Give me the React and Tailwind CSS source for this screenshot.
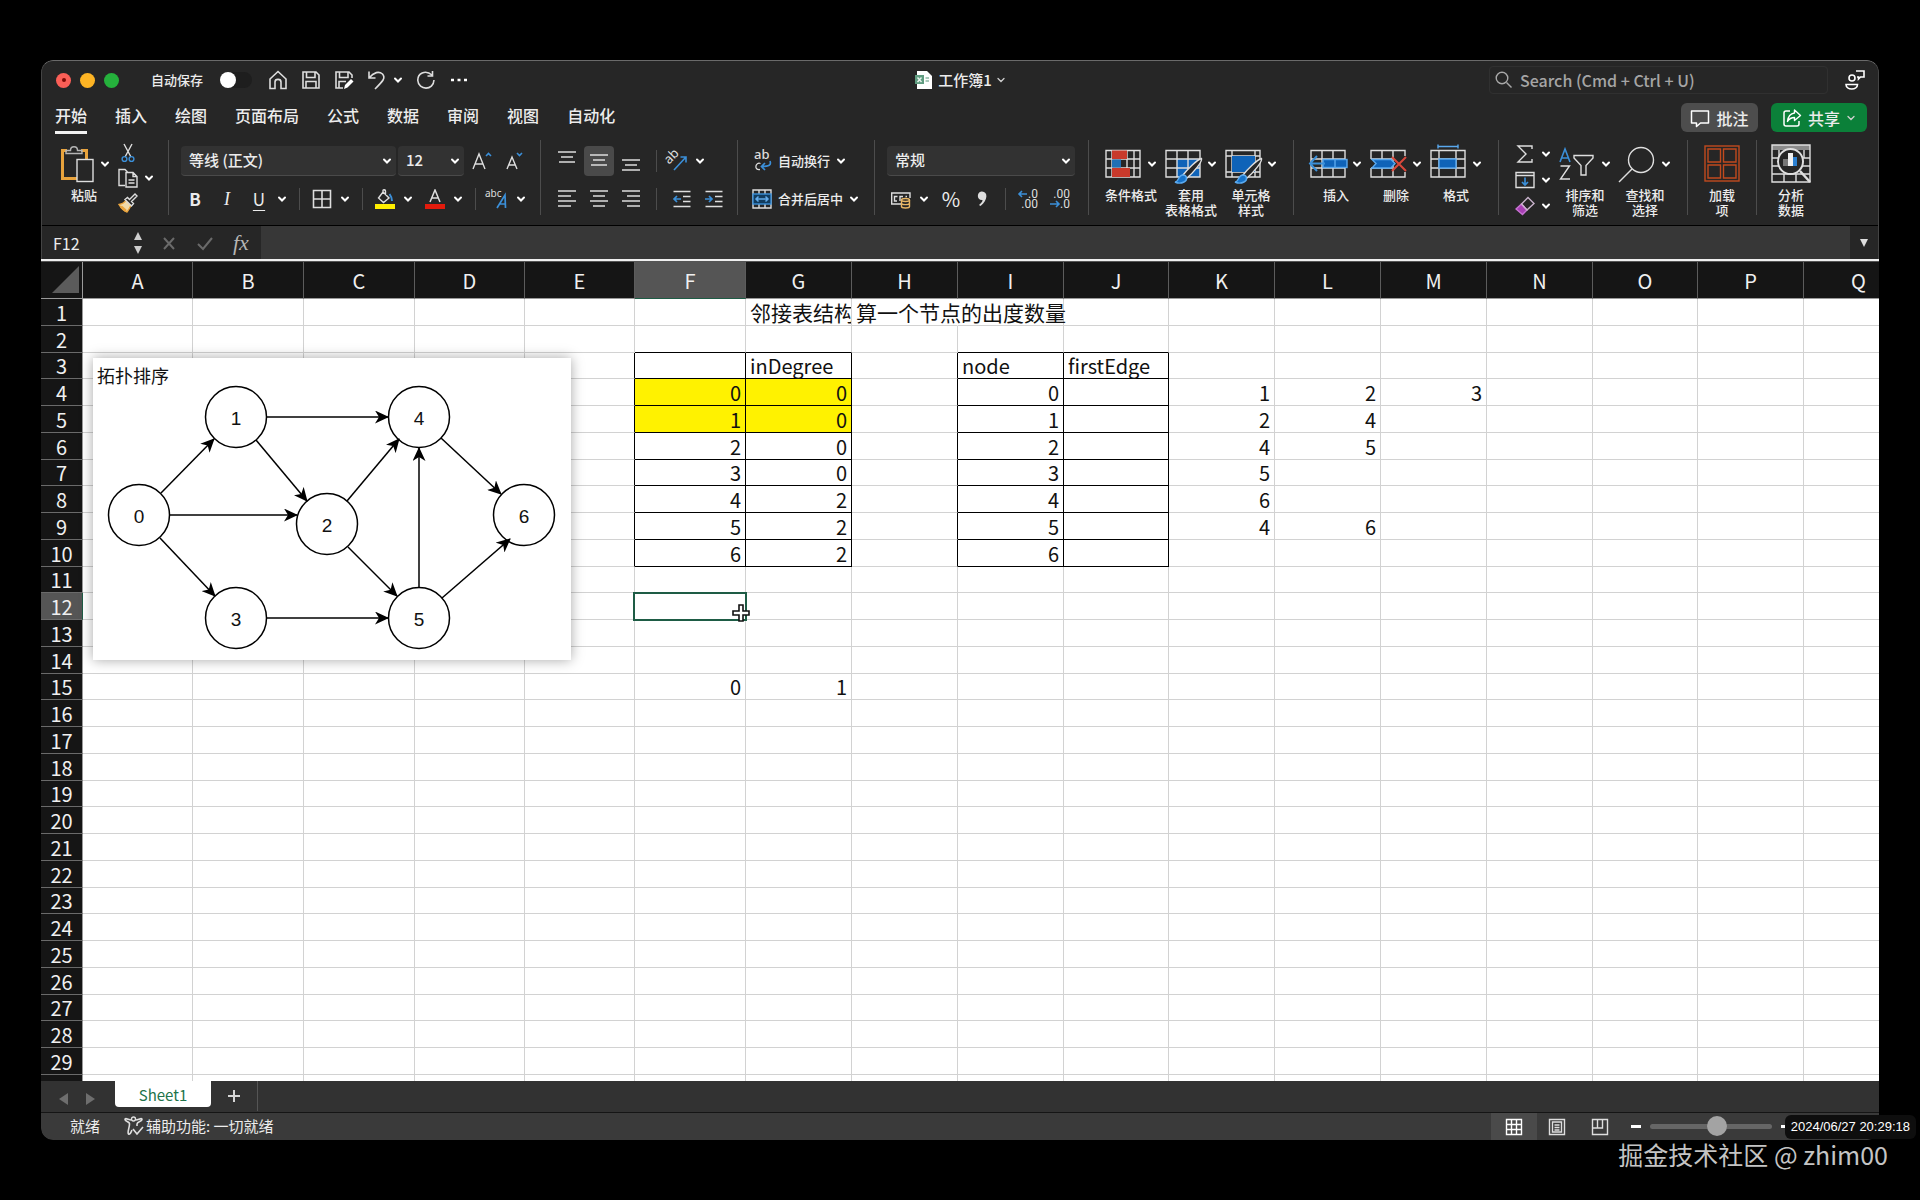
import { clsx } from "clsx";

const SHEET_COLUMNS = [
  { name: "A", width: "w-[110px]" },
  { name: "B", width: "w-[111px]" },
  { name: "C", width: "w-[111px]" },
  { name: "D", width: "w-[110px]" },
  { name: "E", width: "w-[110px]" },
  { name: "F", width: "w-[111px]" },
  { name: "G", width: "w-[106px]" },
  { name: "H", width: "w-[106px]" },
  { name: "I", width: "w-[106px]" },
  { name: "J", width: "w-[105px]" },
  { name: "K", width: "w-[106px]" },
  { name: "L", width: "w-[106px]" },
  { name: "M", width: "w-[106px]" },
  { name: "N", width: "w-[106px]" },
  { name: "O", width: "w-[105px]" },
  { name: "P", width: "w-[106px]" },
  { name: "Q", width: "w-[110px]" },
];

const ROWS = Array.from({ length: 30 }, (_, index) => index + 1);

const CELLS = {
  G1: "邻接表结构",
  H1: "算一个节点的出度数量",
  G3: "inDegree",
  I3: "node",
  J3: "firstEdge",
  F4: 0, G4: 0, I4: 0, K4: 1, L4: 2, M4: 3,
  F5: 1, G5: 0, I5: 1, K5: 2, L5: 4,
  F6: 2, G6: 0, I6: 2, K6: 4, L6: 5,
  F7: 3, G7: 0, I7: 3, K7: 5,
  F8: 4, G8: 2, I8: 4, K8: 6,
  F9: 5, G9: 2, I9: 5, K9: 4, L9: 6,
  F10: 6, G10: 2, I10: 6,
  F15: 0, G15: 1,
};

const HIGHLIGHTED = ["F4", "G4", "F5", "G5"];
const BOXED_COLUMNS = ["F", "G", "I", "J"];
const ACTIVE = { column: "F", row: 12 };

const TABS = ["开始", "插入", "绘图", "页面布局", "公式", "数据", "审阅", "视图", "自动化"];

const NODES = [
  { id: 0, x: 46, y: 157 },
  { id: 1, x: 143, y: 59 },
  { id: 2, x: 234, y: 166 },
  { id: 3, x: 143, y: 260 },
  { id: 4, x: 326, y: 59 },
  { id: 5, x: 326, y: 260 },
  { id: 6, x: 431, y: 157 },
];

const EDGES = [
  [68, 135, 121, 81],
  [174, 59, 295, 59],
  [163, 82, 214, 143],
  [77, 157, 204, 157],
  [254, 143, 306, 81],
  [67, 180, 122, 238],
  [174, 260, 295, 260],
  [255, 189, 304, 238],
  [326, 229, 326, 90],
  [348, 80, 408, 136],
  [349, 240, 417, 181],
];

function isBoxed(column, row) {
  return BOXED_COLUMNS.includes(column) && row >= 3 && row <= 10;
}

/* ---------- icons ---------- */

function Icon({ children, className = "h-5 w-5", box = "0 0 20 20" }) {
  return (
    <svg
      aria-hidden="true"
      className={clsx("shrink-0", className)}
      fill="none"
      stroke="#dedede"
      strokeWidth="1.4"
      viewBox={box}
    >
      {children}
    </svg>
  );
}

function Chevron({ thin }) {
  return (
    <svg aria-hidden="true" className="h-2.5 w-2.5 shrink-0" fill="none" viewBox="0 0 10 10">
      <path d="M2 3.5 5 6.5 8 3.5" stroke={thin ? "#d0d0d0" : "#fff"} strokeLinecap="round" strokeWidth={thin ? 1.3 : 2} />
    </svg>
  );
}

function Lines({ rows }) {
  return (
    <Icon>
      {rows.map(([x1, x2, y]) => (
        <path d={`M${x1} ${y}H${x2}`} key={y} strokeWidth="1.5" />
      ))}
    </Icon>
  );
}

function PasteIcon() {
  return (
    <Icon box="0 0 36 40" className="h-10 w-9">
      <path d="M9 6.5H4.5V34.5H19M23 6.5H28.5V15" stroke="#e8a33d" strokeWidth="3" />
      <path d="M8 9.5V6.5H12.5C12.5 1.5 19.5 1.5 19.5 6.5H24V9.5Z" stroke="#b5b5b5" />
      <rect fill="#262626" height="22" width="16" x="19" y="15.5" />
    </Icon>
  );
}

function CutIcon() {
  return (
    <Icon>
      <path d="M6 1 13 14M14 1 7 14" />
      <circle cx="6.5" cy="16" r="2.4" stroke="#3b8fd8" />
      <circle cx="13.5" cy="16" r="2.4" stroke="#3b8fd8" />
    </Icon>
  );
}

function CopyIcon() {
  return (
    <Icon>
      <path d="M7 17.5H1V1.5H7L9.5 4" />
      <path d="M8 4.5H15L19 8.5V19H8ZM15 4.5V8.5H19M10.5 12H16.5M10.5 15H16.5" fill="#262626" />
    </Icon>
  );
}

function BrushIcon() {
  return (
    <Icon>
      <path d="M1 11.5C4.500 11 7 9 8 7L13 12.5C12 14.5 10.500 17 9 19 6 18 3 15 1 11.5Z" fill="#f0d9a8" stroke="#e8a33d" />
      <path d="M3 13.500 8 18" stroke="#e8a33d" strokeWidth="2.5" />
      <path d="M7 6.5 13.5 13 15.500 10.5 13.5 8.5 19 3 17 1 11.5 6.5 9.5 4.5Z" fill="#262626" />
    </Icon>
  );
}

function FontSizeIcon({ down }) {
  return (
    <Icon>
      {down ? (
        <path d="M3 18 8 6 13 18M5 14H11" />
      ) : (
        <path d="M1 18 7 3 13 18M3 13H11" />
      )}
      <path d={down ? "M13 2 15.500 4.500 18 2" : "M14 5 16.500 2.500 19 5"} stroke="#3b8fd8" strokeWidth="1.6" />
    </Icon>
  );
}

function BordersIcon() {
  return (
    <Icon>
      <path d="M1.5 1.5H18.5V18.5H1.5ZM10 1.5V18.5M1.5 10H18.5" strokeWidth="1.6" />
    </Icon>
  );
}

function FillColorIcon() {
  return (
    <Icon>
      <path d="M8 3 14 9 8.5 13.5 3.5 9ZM8 3V1.5C8 .5 10.5 .5 10.5 2V6" />
      <path d="M14.5 5C16 7 17 9 17 12" stroke="#3b8fd8" strokeWidth="2" />
      <rect fill="#ffee00" height="5" stroke="none" width="20" y="15" />
    </Icon>
  );
}

function FontColorIcon() {
  return (
    <Icon>
      <path d="M5 13 10 1 15 13M7 9H13" strokeWidth="1.5" />
      <rect fill="#e31b0c" height="5" stroke="none" width="20" y="15" />
    </Icon>
  );
}

function PhoneticIcon() {
  return (
    <Icon className="h-5 w-5 overflow-visible">
      <text fill="#dedede" fontFamily="Noto Sans" fontSize="10" stroke="none" x="-3" y="8">abc</text>
      <path d="M9 19 17 6 17.5 19M12 15H17.5" stroke="#3b8fd8" strokeWidth="1.7" />
    </Icon>
  );
}

function OrientationIcon() {
  return (
    <Icon className="h-5 w-5 overflow-visible">
      <text fill="#dedede" fontFamily="Noto Sans" fontSize="13" stroke="none" transform="rotate(-45 4 13)" x="2" y="12">ab</text>
      <path d="M7 19 19 6M13.5 6H19V11.5" stroke="#3b8fd8" strokeWidth="1.6" />
    </Icon>
  );
}

function IndentIcon({ right }) {
  return (
    <Icon>
      <path d="M1.5 2.5H18.5M11 7.5H18.5M11 12.5H18.5M1.5 17.5H18.5" strokeWidth="1.5" />
      <path d={right ? "M1 10H8M5 7 8 10 5 13" : "M9 10H2M5 7 2 10 5 13"} stroke="#3b8fd8" strokeWidth="1.7" />
    </Icon>
  );
}

function WrapIcon() {
  return (
    <Icon className="h-5 w-5 overflow-visible">
      <text fill="#dedede" fontFamily="Noto Sans" fontSize="13" stroke="none" x="2" y="8">ab</text>
      <path d="M8.5 12.500C3.500 10.500 1.500 19.500 8 18.500" strokeWidth="1.3" />
      <path d="M18 10C19.5 14 17 15.5 10 15.5M13 12 9.5 15.5 13 19" stroke="#3b8fd8" strokeWidth="1.7" />
    </Icon>
  );
}

function MergeIcon() {
  return (
    <Icon>
      <path d="M1 1H19V19H1ZM7 1V5M13 1V5M7 15V19M13 15V19" />
      <rect fill="#123c5e" height="10" stroke="#3b8fd8" width="18" x="1" y="5" />
      <path d="M4 10H16M6.5 7.5 4 10 6.5 12.5M13.5 7.5 16 10 13.5 12.5" stroke="#62abea" strokeWidth="1.5" />
    </Icon>
  );
}

function CurrencyIcon() {
  return (
    <Icon>
      <path d="M10 15H.7V4H19V9" />
      <path d="M6.5 7.5H3.5V12H6M12 7.5H9V12M14.5 7.5H16" />
      <path d="M10.5 11V17.5C10.5 19.5 18.5 19.5 18.5 17.5V11" fill="#262626" stroke="#e9b765" />
      <ellipse cx="14.5" cy="11" fill="#262626" rx="4" ry="1.5" stroke="#e9b765" />
      <path d="M10.5 14.5C11 16 18 16 18.5 14.5" stroke="#e9b765" />
    </Icon>
  );
}

function DecimalIcon({ decrease }) {
  return (
    <Icon className="h-5 w-5 overflow-visible">
      <text fill="#dedede" fontFamily="Roboto" fontSize="12" stroke="none" textAnchor="end" x="20" y="9">
        {decrease ? ".00" : ".0"}
      </text>
      <text fill="#dedede" fontFamily="Roboto" fontSize="12" stroke="none" textAnchor="end" x="20" y="19">
        {decrease ? ".0" : ".00"}
      </text>
      <path
        d={decrease ? "M0 15H9M6 12 9 15 6 18" : "M9 5H1M4 2 1 5 4 8"}
        stroke="#3b8fd8"
        strokeWidth="1.6"
      />
    </Icon>
  );
}

function TableGrid() {
  return <path d="M1 6.5H35V33H1ZM1 15H35M1 24H35M12 6.5V33M23 6.5V33" />;
}

function PaintBrush() {
  return (
    <>
      <path d="M18 31C22 26 32 15.5 36.500 14.500 37.500 18 28 29 22 34Z" fill="#262626" />
      <path d="M10 38C14 38 13 31 18 31 22 31 23 36 19 38 16 39.5 12 39 10 38Z" fill="#1572c9" stroke="#5aa9ee" />
    </>
  );
}

function ConditionalIcon() {
  return (
    <Icon box="0 0 36 40" className="h-10 w-9">
      <path d="M1 6.5H35V33H1ZM1 15H35M1 24H35M7 6.5V33M22 6.5V33M29 6.5V33" />
      <path d="M7 6.5H22V15H7ZM7 24H25V33H7Z" fill="#c8392b" stroke="none" />
      <rect fill="#1f6fb5" height="8" stroke="none" width="9" x="7" y="15.5" />
    </Icon>
  );
}

function TableFormatIcon() {
  return (
    <Icon box="0 0 36 40" className="h-10 w-9 overflow-visible">
      <rect fill="#0f63b8" height="18" stroke="none" width="23" x="12" y="15" />
      <TableGrid />
      <PaintBrush />
    </Icon>
  );
}

function CellStyleIcon() {
  return (
    <Icon box="0 0 36 40" className="h-10 w-9 overflow-visible">
      <path d="M1 6.5H35V33H1ZM1 12H35M7 6.5V33M1 28H35M30 6.5V33" />
      <rect fill="#0f63b8" height="16" stroke="none" width="23" x="7" y="12" />
      <PaintBrush />
    </Icon>
  );
}

function InsertIcon() {
  return (
    <Icon box="0 0 36 40" className="h-10 w-9 overflow-visible">
      <TableGrid />
      <rect fill="#0f63b8" height="8" stroke="#5aa9ee" width="24" x="13" y="15.5" />
      <path d="M25 16V23" stroke="#5aa9ee" />
      <path d="M15 19.5H0M7 12 0 19.5 7 27" stroke="#3b8fd8" strokeWidth="2" />
    </Icon>
  );
}

function DeleteIcon() {
  return (
    <Icon box="0 0 36 40" className="h-10 w-9 overflow-visible">
      <path d="M1 15V6.5H35V12M1 24V33H35V28M12 6.5V33M23 6.5V33M1 15H22M1 24H22" />
      <path d="M2 15.5H21L25 19.500 21 24H2L6 19.5Z" fill="#0f63b8" stroke="#5aa9ee" />
      <path d="M22 13 36 27M36 13 22 27" stroke="#d9483b" strokeWidth="2" />
    </Icon>
  );
}

function FormatIcon() {
  return (
    <Icon box="0 0 36 40" className="h-10 w-9 overflow-visible">
      <path d="M1 6.5H35V33H1ZM1 15H35M1 24H35M9 6.5V33M26 6.5V33" />
      <rect fill="#0f63b8" height="9" stroke="#5aa9ee" width="17" x="9" y="15" />
      <path d="M8 2.5H28M8 .5V4.5M28 .5V4.5" stroke="#5aa9ee" />
    </Icon>
  );
}

function SortIcon() {
  return (
    <Icon box="0 0 36 40" className="h-10 w-9 overflow-visible">
      <path d="M1 18 6 5 11 18M3 14H9" stroke="#3b8fd8" strokeWidth="1.6" />
      <path d="M1.5 22H10.5L1.5 35H11" />
      <path d="M15 11.5H34V14L27 21.5V31H22V21.5L15 14Z" />
    </Icon>
  );
}

function FindIcon() {
  return (
    <Icon box="0 0 36 40" className="h-10 w-9 overflow-visible">
      <circle cx="22" cy="16" r="12.5" />
      <path d="M13 25 0 38" />
    </Icon>
  );
}

function AddInIcon() {
  return (
    <Icon box="0 0 36 40" className="h-10 w-9">
      <g stroke="#c14a1e">
        <rect height="35" width="34" x="1" y="2" />
        <path d="M4 5H16.5V18H4ZM19.5 5H32V18H19.5ZM4 21H16.5V34H4ZM19.5 21H32V34H19.5Z" />
      </g>
    </Icon>
  );
}

function AnalyzeIcon() {
  return (
    <Icon box="0 0 36 40" className="h-10 w-9 overflow-visible">
      <path d="M-1 1H37V6H-1Z" fill="#8b8b8b" stroke="none" />
      <path d="M-1 1H37V38H-1ZM-1 14H37M-1 22H37M-1 30H37M11 30V38M23 30V38M6 6V14M31 6V14" />
      <circle cx="17.5" cy="17.5" fill="#262626" r="12.5" strokeWidth="2" />
      <rect fill="#777" height="7" stroke="none" width="5" x="10" y="15" />
      <rect fill="#f0f0f0" height="13" stroke="none" width="5" x="15" y="9" />
      <rect fill="#2a7fd0" height="9" stroke="none" width="4" x="20" y="13" />
      <path d="M27 27 37 38" strokeWidth="2.5" />
    </Icon>
  );
}

/* ---------- ribbon pieces ---------- */

function Group({ children, className }) {
  return <div className={clsx("flex h-[75px] shrink-0 border-r border-[#4c4c4c]", className)}>{children}</div>;
}

function Separator() {
  return <div className="h-[22px] w-px shrink-0 bg-[#4c4c4c]" />;
}

function BigButton({ icon, label, menu = true }) {
  return (
    <button
      className={clsx("flex shrink-0 flex-col items-center gap-[3px] pt-1", menu ? "w-[52px]" : "w-9")}
      type="button"
    >
      <span className="flex items-center gap-1.5">
        {icon}
        {menu ? <Chevron /> : null}
      </span>
      <span className="whitespace-pre text-[13px] leading-[15px] font-medium">{label}</span>
    </button>
  );
}

function SplitButton({ children, label, gap = "gap-2" }) {
  return (
    <button aria-label={label} className={clsx("flex h-[26px] shrink-0 items-center", gap)} type="button">
      {children}
      <Chevron />
    </button>
  );
}

function ToolButton({ children, label, active, className = "w-5" }) {
  return (
    <button
      aria-label={label}
      className={clsx("flex h-[30px] shrink-0 items-center justify-center rounded", active && "bg-[#4a4a4a]", className)}
      type="button"
    >
      {children}
    </button>
  );
}

function Dropdown({ label, value, className }) {
  return (
    <div className={clsx("relative flex h-[30px] shrink-0 items-center rounded border-b border-[#4a4a4a] bg-[#323232]", className)}>
      <select aria-label={label} className="h-full w-full appearance-none pl-2 text-[15px] font-medium outline-none" defaultValue={value}>
        <option value={value}>{value}</option>
      </select>
      <span className="pointer-events-none absolute right-1">
        <Chevron />
      </span>
    </div>
  );
}

function TitleBar() {
  return (
    <div className="grid h-[38px] grid-cols-[1fr_auto_1fr] items-center">
      <div className="flex items-center pl-[14px]">
        <div className="flex gap-[9px]">
          <button aria-label="关闭" className="flex h-[15px] w-[15px] items-center justify-center rounded-full bg-[#fb5f57]" type="button">
            <span className="h-1 w-1 rounded-full bg-[#7d0a05]" />
          </button>
          <button aria-label="最小化" className="h-[15px] w-[15px] rounded-full bg-[#fdb424]" type="button" />
          <button aria-label="缩放" className="h-[15px] w-[15px] rounded-full bg-[#25b13c]" type="button" />
        </div>
        <label className="ml-8 flex items-center gap-[17px] text-[13px] font-medium">
          自动保存
          <input className="peer sr-only" type="checkbox" />
          <span className="h-4 w-8 rounded-full bg-[#1e1e1e]">
            <span className="block h-4 w-4 rounded-full bg-white" />
          </span>
        </label>
        <div className="ml-4 flex items-center gap-[13px]">
          <ToolButton label="主页">
            <Icon>
              <path d="M2 9 10 1.5 18 9V18.5H13V12C13 8.5 7 8.5 7 12V18.5H2Z" strokeWidth="1.6" />
            </Icon>
          </ToolButton>
          <ToolButton label="保存">
            <Icon>
              <path d="M2 2H15L18 5V18H2ZM5.5 2V7.5H14V2M5 18V11.5H15V18" strokeWidth="1.6" />
            </Icon>
          </ToolButton>
          <ToolButton label="另存为">
            <Icon>
              <path d="M9 18H2V2H15L18 5V8M5.5 2V7.5H14V2M5 18V11.5H12" strokeWidth="1.6" />
              <path d="M10 19 11 15 17 9 19.5 11.5 13.5 17.5Z" fill="#fff" stroke="none" />
            </Icon>
          </ToolButton>
          <SplitButton gap="gap-1.5" label="撤消">
            <Icon>
              <path d="M2 1.5V8H8.5M2 8C7 2 12 1 15.5 4 19 8 16 11 8 19" strokeWidth="1.6" />
            </Icon>
          </SplitButton>
          <ToolButton label="恢复">
            <Icon>
              <path d="M16 5C9 -1 1.5 4 1.8 10.5 2.5 20.5 17.5 21 18 10M16.5 1V6H11.5" strokeWidth="1.6" />
            </Icon>
          </ToolButton>
          <ToolButton label="更多">
            <Icon>
              <path d="M2 10H5M8.5 10H11.5M15 10H18" stroke="#fff" strokeWidth="2.6" />
            </Icon>
          </ToolButton>
        </div>
      </div>
      <button className="flex items-center gap-1 text-[15px] leading-5 font-medium" type="button">
        <Icon>
          <path d="M3 1H13L18 6V19H3Z" fill="#fff" stroke="none" />
          <rect fill="#5f9c80" height="9" stroke="none" width="9" x="1" y="5" />
          <path d="M3.5 7.5 7.5 12M7.5 7.5 3.5 12" stroke="#e9f4ee" />
          <path d="M11.5 8H15M11.5 11H15" stroke="#8fb8a5" />
        </Icon>
        工作簿1
        <Chevron thin />
      </button>
      <div className="flex items-center justify-end gap-[17px] pr-[13px]">
        <label className="flex h-7 w-[339px] items-center gap-1.5 rounded border border-[#303030] px-1">
          <Icon>
            <circle cx="8" cy="8" r="5.8" stroke="#a8a8a8" />
            <path d="M12.5 12.5 17.5 17.5" stroke="#a8a8a8" />
          </Icon>
          <input
            aria-label="搜索"
            className="w-full text-base font-medium outline-none placeholder:text-[#a5a5a5]"
            placeholder="Search (Cmd + Ctrl + U)"
            type="text"
          />
        </label>
        <button aria-label="帐户" type="button">
          <Icon>
            <circle cx="7" cy="8" r="3" stroke="#fff" strokeWidth="1.6" />
            <path d="M1 14.5H12.5C12.5 20.5 1 20.5 1 14.5Z" stroke="#fff" strokeWidth="1.6" />
            <path d="M11 1H19V7H15.5L13.5 9V7H12" stroke="#fff" strokeWidth="1.6" />
          </Icon>
        </button>
      </div>
    </div>
  );
}

function TabBar() {
  return (
    <div className="flex h-[37px] items-center justify-between pr-[11px] pl-[13px]">
      <nav className="flex gap-7">
        {TABS.map((tab, index) => (
          <button
            className={clsx(
              "border-b-[3px] pt-0.5 pb-1 text-base leading-6 font-medium",
              index === 0 ? "border-[#f2f2f2]" : "border-transparent",
            )}
            key={tab}
            type="button"
          >
            {tab}
          </button>
        ))}
      </nav>
      <div className="flex gap-[13px] text-base font-medium">
        <button className="flex h-[29px] w-[77px] items-center justify-center gap-1.5 rounded-md bg-[#4d4d4d]" type="button">
          <Icon>
            <path d="M1.5 3H18.5V15H10.5L6.5 18.5V15H1.5Z" stroke="#fff" strokeLinejoin="round" strokeWidth="1.5" />
          </Icon>
          批注
        </button>
        <button className="flex h-[29px] w-24 items-center justify-center gap-1.5 rounded-md bg-[#0b8039]" type="button">
          <Icon>
            <path d="M8 3H4Q2 3 2 5V16Q2 18 4 18H15Q17 18 17 16V13" stroke="#fff" strokeWidth="1.5" />
            <path d="M12.5 2 18.5 7.5 12.5 12.5V9.5C9 9.5 7 11 5.5 13.5 6 9 8.5 5.5 12.5 5Z" stroke="#fff" strokeLinejoin="round" />
          </Icon>
          共享
          <Chevron thin />
        </button>
      </div>
    </div>
  );
}

function Ribbon() {
  return (
    <div className="flex h-[90px] items-start border-b border-black pt-1">
      <Group className="gap-2 pr-[14px] pl-4">
        <BigButton icon={<PasteIcon />} label="粘贴" />
        <div className="flex flex-col pt-px">
          <button aria-label="剪切" className="flex h-[26px] items-center" type="button">
            <CutIcon />
          </button>
          <SplitButton gap="gap-1.5" label="复制">
            <CopyIcon />
          </SplitButton>
          <button aria-label="格式刷" className="flex h-[26px] items-center" type="button">
            <BrushIcon />
          </button>
        </div>
      </Group>

      <Group className="w-[372px] flex-col gap-2 pt-1.5 pl-3">
        <div className="flex gap-0.5">
          <Dropdown className="w-[215px]" label="字体" value="等线 (正文)" />
          <Dropdown className="w-[66px]" label="字号" value="12" />
          <div className="flex gap-3 pl-1.5">
            <ToolButton label="增大字号">
              <FontSizeIcon />
            </ToolButton>
            <ToolButton label="减小字号">
              <FontSizeIcon down />
            </ToolButton>
          </div>
        </div>
        <div className="flex items-center gap-3 pl-1 text-[17px] leading-5">
          <ToolButton label="加粗">
            <span className="font-bold">B</span>
          </ToolButton>
          <ToolButton label="倾斜">
            <span className="font-['Liberation_Serif',serif] text-lg italic">I</span>
          </ToolButton>
          <SplitButton label="下划线">
            <span className="w-5 text-center underline underline-offset-4">U</span>
          </SplitButton>
          <Separator />
          <SplitButton label="边框">
            <BordersIcon />
          </SplitButton>
          <Separator />
          <SplitButton label="填充颜色">
            <FillColorIcon />
          </SplitButton>
          <SplitButton label="字体颜色">
            <FontColorIcon />
          </SplitButton>
          <Separator />
          <SplitButton label="拼音">
            <PhoneticIcon />
          </SplitButton>
        </div>
      </Group>

      <Group className="w-[197px] flex-col gap-2 pt-1.5 pl-[11px]">
        <div className="flex items-center gap-0.5">
          <ToolButton className="w-[30px]" label="顶端对齐">
            <Lines rows={[[1, 19, 1], [4, 16, 6], [2, 18, 11]]} />
          </ToolButton>
          <ToolButton active className="w-[30px]" label="垂直居中">
            <Lines rows={[[1, 19, 4], [4, 16, 9], [2, 18, 14]]} />
          </ToolButton>
          <ToolButton className="w-[30px]" label="底端对齐">
            <Lines rows={[[1, 19, 9], [4, 16, 14], [1, 19, 19]]} />
          </ToolButton>
          <div className="px-2">
            <Separator />
          </div>
          <ToolButton className="w-[38px] gap-2" label="方向">
            <OrientationIcon />
            <Chevron />
          </ToolButton>
        </div>
        <div className="flex items-center gap-0.5">
          <ToolButton className="w-[30px]" label="左对齐">
            <Lines rows={[[1, 19, 2], [1, 14, 7], [1, 19, 12], [1, 14, 17]]} />
          </ToolButton>
          <ToolButton className="w-[30px]" label="居中">
            <Lines rows={[[1, 19, 2], [4, 16, 7], [1, 19, 12], [4, 16, 17]]} />
          </ToolButton>
          <ToolButton className="w-[30px]" label="右对齐">
            <Lines rows={[[1, 19, 2], [6, 19, 7], [1, 19, 12], [6, 19, 17]]} />
          </ToolButton>
          <div className="px-2">
            <Separator />
          </div>
          <ToolButton className="w-[30px]" label="减少缩进">
            <IndentIcon />
          </ToolButton>
          <ToolButton className="w-[30px]" label="增加缩进">
            <IndentIcon right />
          </ToolButton>
        </div>
      </Group>

      <Group className="w-[137px] flex-col gap-2 pt-1.5 pl-[14px] text-[13px] font-medium">
        <button className="flex h-[30px] items-center gap-1.5" type="button">
          <WrapIcon />
          自动换行
          <Chevron />
        </button>
        <button className="flex h-[30px] items-center gap-1.5" type="button">
          <MergeIcon />
          合并后居中
          <Chevron />
        </button>
      </Group>

      <Group className="w-[214px] flex-col gap-2 pt-1.5 pl-3">
        <Dropdown className="w-[188px]" label="数字格式" value="常规" />
        <div className="flex items-center gap-3 pl-1">
          <SplitButton label="货币">
            <CurrencyIcon />
          </SplitButton>
          <ToolButton label="百分比">
            <span className="text-xl leading-5">%</span>
          </ToolButton>
          <ToolButton label="千位分隔">
            <Icon>
              <path d="M8.500 2.500C15 2 15.500 11 7.500 17L6 16C8.500 14 9.500 12.500 9.500 11 3.500 11.500 3.500 3 8.500 2.500Z" fill="#dedede" stroke="none" />
            </Icon>
          </ToolButton>
          <Separator />
          <ToolButton label="增加小数位数">
            <DecimalIcon />
          </ToolButton>
          <ToolButton label="减少小数位数">
            <DecimalIcon decrease />
          </ToolButton>
        </div>
      </Group>

      <Group className="gap-2 px-4">
        <BigButton icon={<ConditionalIcon />} label="条件格式" />
        <BigButton icon={<TableFormatIcon />} label={"套用\n表格格式"} />
        <BigButton icon={<CellStyleIcon />} label={"单元格\n样式"} />
      </Group>

      <Group className="gap-2 px-4">
        <BigButton icon={<InsertIcon />} label="插入" />
        <BigButton icon={<DeleteIcon />} label="删除" />
        <BigButton icon={<FormatIcon />} label="格式" />
      </Group>

      <Group className="gap-2 px-4">
        <div className="flex flex-col pt-px">
          <SplitButton gap="gap-1.5" label="自动求和">
            <Icon>
              <path d="M17 5V2H3L11 10 3 18H17V15" />
            </Icon>
          </SplitButton>
          <SplitButton gap="gap-1.5" label="填充">
            <Icon>
              <path d="M1 2.5H19V17.5H1ZM1 5.5H19" />
              <path d="M10 7.5V15M7 12 10 15 13 12" stroke="#3b8fd8" strokeWidth="1.7" />
            </Icon>
          </SplitButton>
          <SplitButton gap="gap-1.5" label="清除">
            <Icon>
              <path d="M1 13 6.5 8 12 14 7.5 18.5Z" fill="#a83fb5" stroke="#c873d2" />
              <path d="M6.5 8 13 1.5 19 7.5 12 14Z" stroke="#c9b3cc" />
            </Icon>
          </SplitButton>
        </div>
        <BigButton icon={<SortIcon />} label={"排序和\n筛选"} />
        <BigButton icon={<FindIcon />} label={"查找和\n选择"} />
      </Group>

      <Group className="px-4">
        <BigButton icon={<AddInIcon />} label={"加载\n项"} menu={false} />
      </Group>
      <div className="px-4">
        <BigButton icon={<AnalyzeIcon />} label={"分析\n数据"} menu={false} />
      </div>
    </div>
  );
}

function FormulaBar() {
  return (
    <div className="flex h-[33px] items-center pl-[11px]">
      <input aria-label="名称框" className="w-20 text-base leading-5 outline-none" defaultValue="F12" type="text" />
      <Icon box="0 0 10 24" className="h-6 w-2.5">
        <path d="M5 1 9 9H1ZM5 23 9 15H1Z" fill="#cfcfcf" stroke="none" />
      </Icon>
      <div className="ml-[18px] flex items-center gap-5">
        <Icon box="0 0 16 16" className="h-4 w-4">
          <path d="M3 3 13 14M13 3 3 14" stroke="#6a6a6a" strokeWidth="2" />
        </Icon>
        <Icon box="0 0 16 16" className="h-4 w-4">
          <path d="M1 9 6 14 15 3" stroke="#6a6a6a" strokeWidth="2" />
        </Icon>
        <span className="w-[18px] font-['Liberation_Serif',serif] text-[22px] leading-6 text-[#b5b5b5] italic">fx</span>
      </div>
      <input aria-label="编辑栏" className="ml-2.5 h-full min-w-0 flex-1 bg-[#373737] px-2 outline-none" type="text" />
      <Icon box="0 0 10 10" className="mx-[9px] h-2.5 w-2.5">
        <path d="M1 1H9L5 9Z" fill="#dcdcdc" stroke="none" />
      </Icon>
    </div>
  );
}

/* ---------- sheet ---------- */

function GraphPicture() {
  return (
    <figure className="absolute top-24 left-[52px] bg-white shadow-[0_0_12px_rgba(0,0,0,0.35)]">
      <svg aria-label="拓扑排序" className="h-[302px] w-[478px]" role="img" viewBox="0 0 478 302">
        <defs>
          <marker id="arrow" markerHeight="13" markerUnits="userSpaceOnUse" markerWidth="14" orient="auto" refX="13" refY="6.5">
            <path d="M0 0 14 6.5 0 13 4 6.5Z" fill="#000" />
          </marker>
        </defs>
        <text fill="#111" fontFamily="Noto Sans CJK SC" fontSize="18" x="4" y="25">拓扑排序</text>
        {EDGES.map(([x1, y1, x2, y2]) => (
          <line key={`${x1}-${y1}-${x2}`} markerEnd="url(#arrow)" stroke="#000" strokeWidth="1.5" x1={x1} x2={x2} y1={y1} y2={y2} />
        ))}
        {NODES.map((node) => (
          <g key={node.id}>
            <circle cx={node.x} cy={node.y} fill="none" r="30.5" stroke="#000" strokeWidth="1.5" />
            <text fill="#111" fontFamily="Liberation Sans" fontSize="19" textAnchor="middle" x={node.x} y={node.y + 8}>
              {node.id}
            </text>
          </g>
        ))}
      </svg>
    </figure>
  );
}

function Selection() {
  return (
    <>
      <span className="pointer-events-none absolute -inset-x-0.5 -top-px -bottom-0.5 border-2 border-[#1e5c45]" />
      <svg aria-hidden="true" className="absolute -right-1.5 -bottom-1 h-5 w-5" viewBox="0 0 20 20">
        <path d="M8 2H12V8H18V12H12V18H8V12H2V8H8Z" fill="#fff" stroke="#111" strokeWidth="1.6" />
      </svg>
    </>
  );
}

function Cell({ index, row }) {
  const column = SHEET_COLUMNS[index].name;
  const next = SHEET_COLUMNS[index + 1]?.name;
  const key = column + row;
  const value = CELLS[key];
  const boxed = isBoxed(column, row);
  const darkRight = boxed || isBoxed(next, row);
  const darkBottom = boxed || isBoxed(column, row + 1);
  const active = column === ACTIVE.column && row === ACTIVE.row;

  return (
    <td
      className={clsx(
        "border-r border-b p-0 px-1 whitespace-nowrap",
        typeof value === "number" && "text-right",
        row === 1 && "text-[21px]",
        darkRight ? "border-r-black" : key === "H1" ? "border-r-white" : "border-r-[#d2d2d2]",
        darkBottom ? "border-b-black" : "border-b-[#d2d2d2]",
        HIGHLIGHTED.includes(key) && "bg-[#fff200]",
        key === "G1" && "overflow-hidden",
        active && "relative",
      )}
    >
      {value}
      {active ? <Selection /> : null}
    </td>
  );
}

function Sheet() {
  return (
    <main className="relative min-h-0 flex-1 overflow-hidden border-t border-[#555] bg-white">
      <table className="w-[1873px] table-fixed border-separate border-spacing-0 text-xl leading-[25px] text-[#111]">
        <colgroup>
          <col className="w-[42px]" />
          {SHEET_COLUMNS.map((column) => (
            <col className={column.width} key={column.name} />
          ))}
        </colgroup>
        <thead>
          <tr className="h-[37px] bg-[#151515] text-[#f0f0f0]">
            <th aria-label="全选" className="border-r border-b border-[#9a9a9a] p-0">
              <svg aria-hidden="true" className="ml-auto h-8 w-8" viewBox="0 0 32 32">
                <path d="M29 2V29H2Z" fill="#5b5b5b" />
              </svg>
            </th>
            {SHEET_COLUMNS.map(({ name }) => (
              <th
                className={clsx(
                  "border-r border-b border-r-[#5c5c5c] p-0 font-normal",
                  name === ACTIVE.column ? "border-b-[#1e5c45] bg-[#555]" : "border-b-[#9a9a9a]",
                )}
                key={name}
                scope="col"
              >
                {name}
              </th>
            ))}
          </tr>
        </thead>
        <tbody>
          {ROWS.map((row) => (
            <tr className={row % 4 === 3 ? "h-[26px]" : "h-[27px]"} key={row}>
              <th
                className={clsx(
                  "border-r border-b border-b-[#6a6a6a] p-0 font-normal text-[#f0f0f0]",
                  row === ACTIVE.row ? "border-r-[#1e5c45] bg-[#555]" : "border-r-[#9a9a9a] bg-[#151515]",
                )}
                scope="row"
              >
                {row}
              </th>
              {SHEET_COLUMNS.map((column, index) => (
                <Cell index={index} key={column.name} row={row} />
              ))}
            </tr>
          ))}
        </tbody>
      </table>
      <GraphPicture />
    </main>
  );
}

function SheetTabs() {
  return (
    <div className="flex h-[31px] items-start bg-[#323232]">
      <div className="flex h-full w-[74px] items-center gap-4 pt-1 pl-4">
        <Icon box="0 0 12 12" className="h-3 w-3">
          <path d="M11 0V12L2 6Z" fill="#6e6e6e" stroke="none" />
        </Icon>
        <Icon box="0 0 12 12" className="h-3 w-3">
          <path d="M1 0V12L10 6Z" fill="#6e6e6e" stroke="none" />
        </Icon>
      </div>
      <button className="h-[26px] w-24 rounded-b-sm bg-white pt-0.5 text-[15px] leading-6 text-[#21734a]" type="button">
        Sheet1
      </button>
      <button aria-label="新建工作表" className="flex h-[30px] w-[47px] items-center justify-center border-r border-[#555]" type="button">
        <Icon box="0 0 12 12" className="h-3 w-3">
          <path d="M6 0V12M0 6H12" stroke="#d6d6d6" strokeWidth="2" />
        </Icon>
      </button>
    </div>
  );
}

function StatusBar() {
  return (
    <footer className="flex h-7 items-center justify-between rounded-b-xl border-t border-[#151515] bg-[#3a3a3a] text-[15px] leading-5">
      <div className="flex items-center pb-0.5 pl-[29px]">
        <span>就绪</span>
        <button className="ml-6 flex items-center gap-0.5" type="button">
          <Icon>
            <path d="M7 4C4 3.5 1 1.5 1 3.5 1 5.5 6 5.5 5.5 8 5.5 12 3 16 4.5 18 6 19 7 16 8 14M12 4C15 3.5 18 1.5 18 3.5 18 5.5 13 5.5 13 8V10M9 13 13 18 19 11" strokeWidth="1.6" />
            <circle cx="9.5" cy="3" r="2" />
          </Icon>
          辅助功能: 一切就绪
        </button>
      </div>
      <div className="flex h-full items-center pr-[92px]">
        <button aria-label="普通" className="flex h-full w-[46px] items-center justify-center bg-[#4a4a4a]" type="button">
          <Icon box="0 0 18 18" className="h-[18px] w-[18px]">
            <path d="M1.5 1.5H16.5V16.5H1.5ZM6.5 1.5V16.5M11.5 1.5V16.5M1.5 6.5H16.5M1.5 11.5H16.5" stroke="#fff" />
          </Icon>
        </button>
        <button aria-label="页面布局" className="flex h-full w-10 items-center justify-center" type="button">
          <Icon box="0 0 18 18" className="h-[18px] w-[18px]">
            <path d="M1.5 1.5H16.5V16.5H1.5ZM4.5 4H13.5V14H4.5ZM6.5 7H11.5M6.5 9.5H11.5M6.5 12H11.5" />
          </Icon>
        </button>
        <button aria-label="分页预览" className="flex h-full w-[46px] items-center justify-center" type="button">
          <Icon box="0 0 18 18" className="h-[18px] w-[18px]">
            <path d="M1.5 1.5H16.5V16.5H1.5ZM1.5 10H11.5V1.5M6.5 1.5V10" />
          </Icon>
        </button>
        <button aria-label="缩小" className="ml-2 h-[3px] w-2.5 bg-white" type="button" />
        <input
          aria-label="缩放"
          className="mx-[9px] h-5 w-[122px] appearance-none bg-transparent [&::-webkit-slider-runnable-track]:h-[5px] [&::-webkit-slider-runnable-track]:rounded-full [&::-webkit-slider-runnable-track]:bg-[#666] [&::-webkit-slider-thumb]:-mt-2 [&::-webkit-slider-thumb]:h-5 [&::-webkit-slider-thumb]:w-5 [&::-webkit-slider-thumb]:appearance-none [&::-webkit-slider-thumb]:rounded-full [&::-webkit-slider-thumb]:bg-[#a3a3a3]"
          defaultValue="56"
          type="range"
        />
        <button aria-label="放大" className="h-[3px] w-1.5 bg-white" type="button" />
      </div>
    </footer>
  );
}

export default function App() {
  return (
    <div className="relative h-screen min-h-[600px] bg-black px-[41px] py-[60px] font-['Noto_Sans_CJK_SC','Liberation_Sans',sans-serif] text-[#ececec]">
      <div className="flex h-full flex-col overflow-hidden rounded-xl">
        <header className="rounded-t-xl border-x border-t border-x-[#444] border-t-[#6a6a6a] bg-[#262626]">
          <TitleBar />
          <TabBar />
          <Ribbon />
          <FormulaBar />
        </header>
        <div className="h-0.5 shrink-0 bg-[#efefef]" />
        <Sheet />
        <SheetTabs />
        <StatusBar />
      </div>
      <time className="absolute right-1 bottom-[61px] rounded-md bg-[#0e0e0e] px-1.5 font-['Liberation_Sans',sans-serif] text-[13px] leading-6 font-medium whitespace-nowrap text-white">
        2024/06/27 20:29:18
      </time>
      <p className="absolute right-8 bottom-[26px] text-[25px] leading-10 text-[#c4c4c4]">掘金技术社区 @ zhim00</p>
    </div>
  );
}
